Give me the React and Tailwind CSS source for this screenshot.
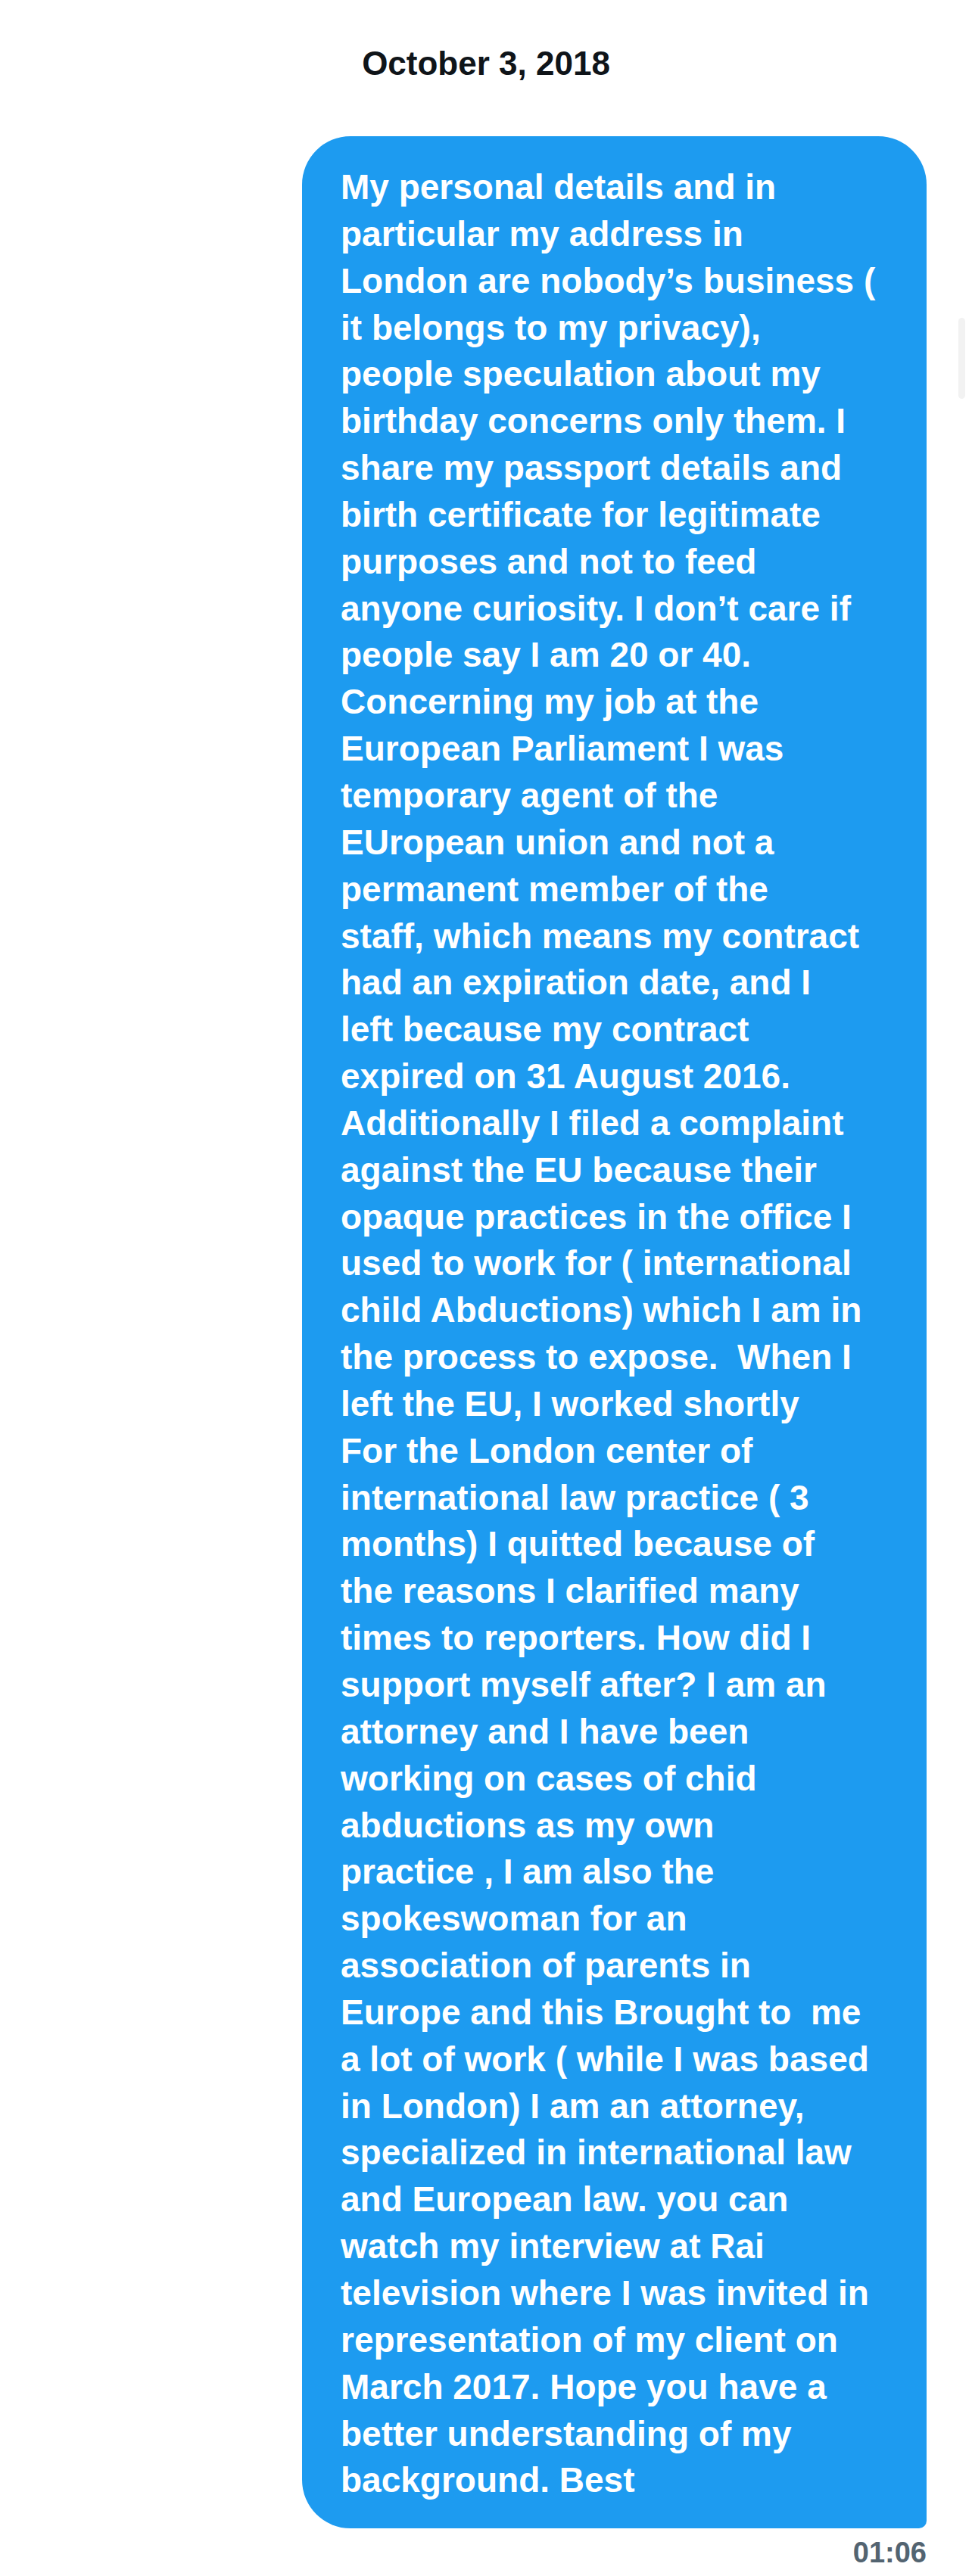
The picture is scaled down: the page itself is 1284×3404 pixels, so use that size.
import React from "react";

const lines = [
  "My personal details and in",
  "particular my address in",
  "London are nobody\u2019s business (",
  "it belongs to my privacy),",
  "people speculation about my",
  "birthday concerns only them. I",
  "share my passport details and",
  "birth certificate for legitimate",
  "purposes and not to feed",
  "anyone curiosity. I don\u2019t care if",
  "people say I am 20 or 40.",
  "Concerning my job at the",
  "European Parliament I was",
  "temporary agent of the",
  "EUropean union and not a",
  "permanent member of the",
  "staff, which means my contract",
  "had an expiration date, and I",
  "left because my contract",
  "expired on 31 August 2016.",
  "Additionally I filed a complaint",
  "against the EU because their",
  "opaque practices in the office I",
  "used to work for ( international",
  "child Abductions) which I am in",
  "the process to expose.  When I",
  "left the EU, I worked shortly",
  "For the London center of",
  "international law practice ( 3",
  "months) I quitted because of",
  "the reasons I clarified many",
  "times to reporters. How did I",
  "support myself after? I am an",
  "attorney and I have been",
  "working on cases of chid",
  "abductions as my own",
  "practice , I am also the",
  "spokeswoman for an",
  "association of parents in",
  "Europe and this Brought to  me",
  "a lot of work ( while I was based",
  "in London) I am an attorney,",
  "specialized in international law",
  "and European law. you can",
  "watch my interview at Rai",
  "television where I was invited in",
  "representation of my client on",
  "March 2017. Hope you have a",
  "better understanding of my",
  "background. Best",
];

export default function App() {
  return (
    <div className="relative w-[1284px] min-h-[3404px] bg-white font-['Liberation_Sans',Arial,sans-serif]">
      <div className="pt-[59px] text-center text-[44px] leading-[50px] font-bold text-[#0f1419]">
        October 3, 2018
      </div>
      <div className="mt-[71px] ml-[399px] w-[825px] rounded-[64px] rounded-br-[10px] bg-[#1d9bf0] pl-[51px] pt-[37px] pb-[32px] text-white text-[46px] leading-[61.84px] font-bold">
        {lines.map((l, i) => (
          <div key={i} className="whitespace-pre">
            {l}
          </div>
        ))}
      </div>
      <div className="mt-[12px] w-[1224px] text-right text-[38px] leading-[40px] font-bold text-[#536471]">
        01:06
      </div>
      <div className="absolute left-[1266px] top-[420px] w-[9px] h-[107px] rounded-full bg-[#f2f2f2]" />
    </div>
  );
}
